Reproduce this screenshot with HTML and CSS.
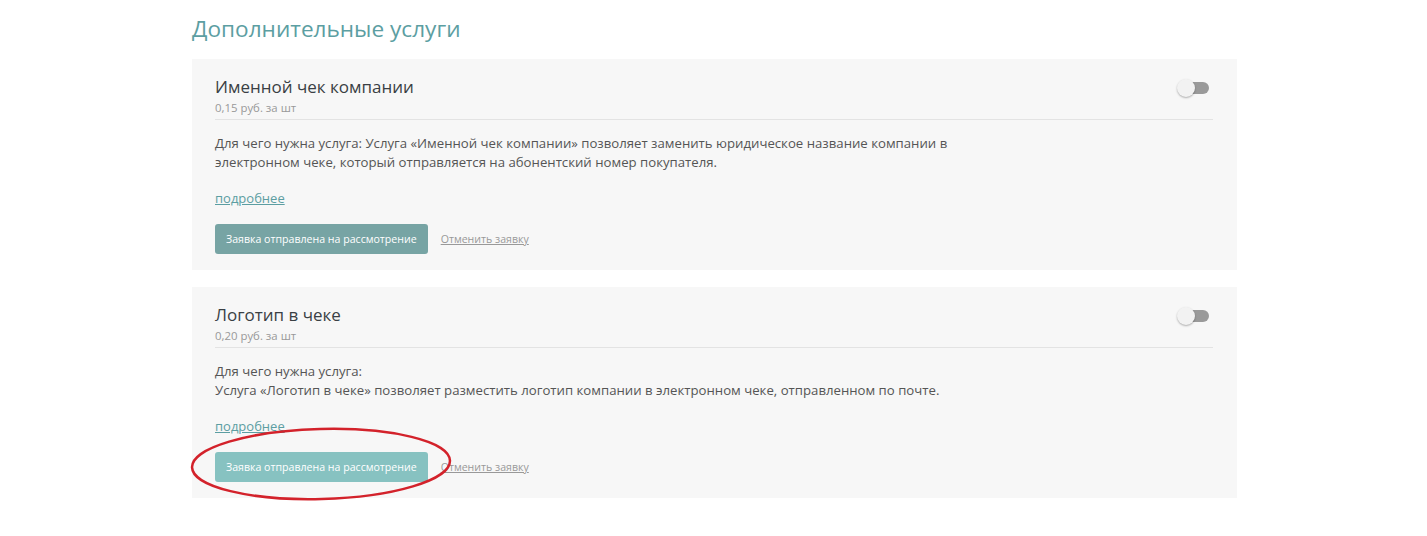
FILE: index.html
```html
<!DOCTYPE html>
<html lang="ru">
<head>
    <meta charset="UTF-8">
    <meta name="viewport" content="width=device-width, initial-scale=1.0">
    <link rel="stylesheet" href="styles.css">
    <title>Дополнительные услуги</title>
</head>
<body>
    <div class="page">
        <h1 class="page-title">Дополнительные услуги</h1>

        <div class="service">
            <div class="service-head">
                <div>
                    <div class="service-name">Именной чек компании</div>
                    <div class="service-price">0,15 руб. за шт</div>
                </div>
                <span class="toggle"><span class="toggle-knob"></span></span>
            </div>
            <p class="service-desc">Для чего нужна услуга: Услуга «Именной чек компании» позволяет заменить юридическое название компании в электронном чеке, который отправляется на абонентский номер покупателя.</p>
            <a class="more-link" href="#">подробнее</a>
            <div class="service-actions">
                <button class="btn-sent">Заявка отправлена на рассмотрение</button>
                <a class="cancel-link" href="#">Отменить заявку</a>
            </div>
        </div>

        <div class="service">
            <div class="service-head">
                <div>
                    <div class="service-name">Логотип в чеке</div>
                    <div class="service-price">0,20 руб. за шт</div>
                </div>
                <span class="toggle"><span class="toggle-knob"></span></span>
            </div>
            <p class="service-desc">Для чего нужна услуга:<br>Услуга «Логотип в чеке» позволяет разместить логотип компании в электронном чеке, отправленном по почте.</p>
            <a class="more-link" href="#">подробнее</a>
            <div class="service-actions">
                <button class="btn-sent btn-light">Заявка отправлена на рассмотрение</button>
                <a class="cancel-link" href="#">Отменить заявку</a>
            </div>
            <!-- red mark over the button -->
            <svg class="mark" width="280" height="90" viewBox="0 0 280 90">
                <ellipse cx="140" cy="45" rx="129" ry="35" fill="none" stroke="#d3222b" stroke-width="2.5" transform="rotate(-1.5 140 45)"/>
            </svg>
        </div>
    </div>
</body>
</html>
```

FILE: styles.css
```css
body {
    margin: 0;
    background: #fff;
    font-family: 'Open Sans', 'Noto Sans', sans-serif;
    color: #555;
}

.page {
    width: 1045px;
    margin-left: 192px;
}

.page-title {
    margin: 13px 0 14px;
    font-size: 22.6px;
    line-height: 32px;
    font-weight: 400;
    color: #5c9ea2;
}

.service {
    position: relative;
    background: #f7f7f7;
    padding: 17px 24px 16px 23px;
    margin-bottom: 17px;
}

.service-head {
    display: flex;
    justify-content: space-between;
    align-items: flex-start;
    padding-bottom: 3px;
    border-bottom: 1px solid #e3e3e3;
}

.service-name {
    font-size: 17px;
    line-height: 22px;
    color: #3a3f44;
}

.service-price {
    margin-top: 2px;
    font-size: 11.4px;
    line-height: 16px;
    color: #999;
}

.toggle {
    position: relative;
    display: block;
    width: 32px;
    height: 18px;
    margin: 3px 4px 0 0;
}

.toggle::before {
    content: "";
    position: absolute;
    left: 3px;
    right: 0;
    top: 3px;
    height: 12px;
    border-radius: 6px;
    background: #9a9a9a;
}

.toggle-knob {
    position: absolute;
    left: 0;
    top: 0;
    width: 18px;
    height: 18px;
    border-radius: 50%;
    background: #f2f2f2;
    box-shadow: 0 1px 2px rgba(0, 0, 0, 0.3);
}

.service-desc {
    margin: 14px 0 0;
    max-width: 740px;
    font-size: 13.2px;
    line-height: 19px;
    color: #555;
}

.more-link {
    display: inline-block;
    margin-top: 17px;
    font-size: 13px;
    line-height: 19px;
    color: #5c9ea2;
    text-decoration: underline;
}

.service-actions {
    display: flex;
    align-items: center;
    margin-top: 16px;
}

.btn-sent {
    height: 30px;
    padding: 0 11px;
    border: none;
    border-radius: 3px;
    background: #77a4a4;
    color: #fff;
    font-family: inherit;
    font-size: 10.6px;
    cursor: default;
}

.btn-light {
    background: #87c2c1;
}

.cancel-link {
    margin-left: 13px;
    font-size: 10.6px;
    color: #999;
    text-decoration: underline;
}

.mark {
    position: absolute;
    left: -11px;
    top: 132px;
    pointer-events: none;
}
```
